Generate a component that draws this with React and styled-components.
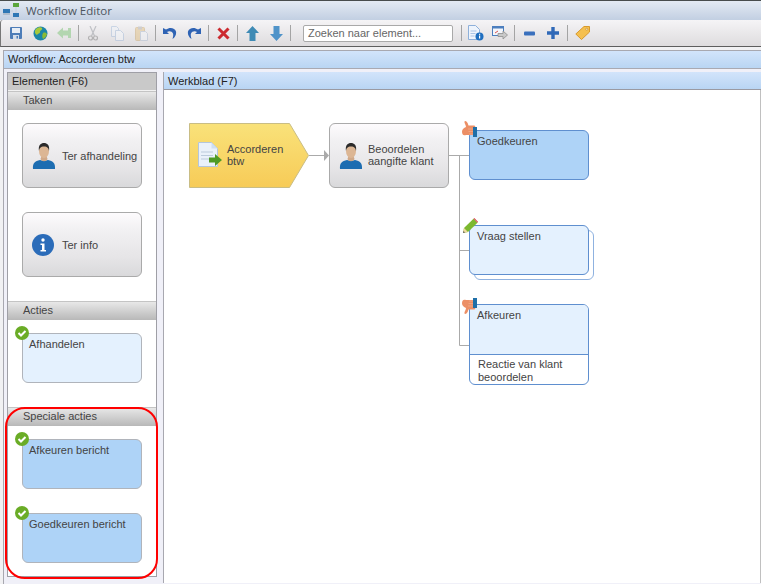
import { Fragment } from "react";
import styled, { createGlobalStyle } from "styled-components";

const GlobalStyle = createGlobalStyle`
    html, body {
        margin: 0;
        padding: 0;
        background: #f1f1f3;
    }
    body {
        font-family: "Liberation Sans", Arial, sans-serif;
        font-size: 11px;
        color: #444;
    }
`;

const Page = styled.div`
    width: 761px;
    height: 584px;
    overflow: hidden;
    position: relative;
`;

const TitleBar = styled.div`
    height: 19px;
    border-top: 1px solid #474c4c;
    background: linear-gradient(#e3eaf3, #c2cfe2);
    display: flex;
    align-items: center;
    padding-left: 2px;
    gap: 6px;
`;

const TitleText = styled.span`
    font-family: "Open Sans", sans-serif;
    font-size: 11.5px;
    color: #4c5560;
`;

const Toolbar = styled.div`
    height: 26px;
    border-bottom: 1px solid #5e5e5e;
    border-left: 1px solid #777;
    border-top-left-radius: 3px;
    background: linear-gradient(#f5f4f6, #dedcde);
    display: flex;
    align-items: center;
    padding-left: 3px;
`;

const ToolButton = styled.div`
    width: 24px;
    height: 24px;
    display: flex;
    align-items: center;
    justify-content: center;
    opacity: ${(props) => (props.$faded ? 0.45 : 1)};
`;

const Separator = styled.div`
    width: 1px;
    height: 16px;
    background: #a4a4a4;
    margin: 0 2px;
`;

const SearchBox = styled.div`
    width: 144px;
    height: 15px;
    margin: 0 6px 0 10px;
    background: #fff;
    border: 1px solid #a9a9a9;
    border-radius: 2px;
    font-size: 11px;
    line-height: 15px;
    color: #666;
    padding-left: 4px;
`;

const Frame = styled.div`
    margin: 3px 0 0 3px;
    height: 533px;
    border: 1px solid #a8a8b0;
    border-right: none;
    border-bottom-color: #c4c4c8;
    background: #f0f0f8;
`;

const WorkflowBar = styled.div`
    height: 17px;
    line-height: 17px;
    padding-left: 4px;
    background: linear-gradient(#d2e4fb, #b9d5f3);
    border-bottom: 1px solid #a9a9b2;
    color: #222;
`;

const Panes = styled.div`
    display: grid;
    grid-template-columns: 150px 1fr;
    column-gap: 6px;
    padding: 3px 0 0 3px;
`;

const Sidebar = styled.div`
    height: 505px;
    border: 1px solid #9f9fa6;
    box-sizing: border-box;
    background: #fff;
`;

const SidebarHeader = styled.div`
    height: 17px;
    line-height: 16px;
    padding-left: 4px;
    background: #c9c9c9;
    border-bottom: 1px solid #f2f2f2;
    color: #222;
`;

const SectionHeader = styled.div`
    height: 18px;
    line-height: 17px;
    padding-left: 15px;
    border-top: 1px solid #c4c4c4;
    background: linear-gradient(#e8e8e8, #b8b8b8);
    color: #444;
`;

const SectionBody = styled.div`
    display: flex;
    flex-direction: column;
    gap: 24px;
    padding: ${(props) => props.$top}px 14px ${(props) => props.$bottom}px 14px;
`;

const Tile = styled.div`
    position: relative;
    width: 120px;
    height: ${(props) => (props.$large ? 65 : 50)}px;
    box-sizing: border-box;
    border: 1px solid ${(props) => (props.$variant === "gray" ? "#aaa" : "#b0b4bb")};
    border-radius: 6px;
    background: ${(props) =>
        props.$variant === "gray"
            ? "linear-gradient(#fdfbfd, #f2f1f3 25%, #e6e5e7 70%, #d9d9db)"
            : props.$variant === "light"
              ? "#e4f1fe"
              : "#aed3f7"};
    display: flex;
    align-items: ${(props) => (props.$variant === "gray" ? "center" : "flex-start")};
    gap: 6px;
    padding: ${(props) => (props.$variant === "gray" ? "0 0 0 9px" : "4px 0 0 6px")};
    color: #444;
`;

const IconSlot = styled.div`
    width: 24px;
    line-height: 0;
`;

const Badge = styled.div`
    position: absolute;
    left: ${(props) => props.$left}px;
    top: ${(props) => props.$top}px;
    line-height: 0;
`;

const Worksheet = styled.div`
    border-left: 1px solid #a8a8b0;
    background: #fff;
`;

const WorksheetHeader = styled.div`
    height: 17px;
    line-height: 19px;
    padding-left: 4px;
    background: linear-gradient(#d2e4fb, #b9d5f3);
    border-bottom: 1px solid #9a9aa2;
    color: #222;
`;

const Canvas = styled.div`
    position: relative;
    height: 493px;
    border-right: 1px solid #c0c0c0;
    background: #fff;
`;

const Wires = styled.svg`
    position: absolute;
    left: 0;
    top: 0;
`;

const Node = styled.div`
    position: absolute;
    left: ${(props) => props.$x}px;
    top: ${(props) => props.$y}px;
    width: ${(props) => props.$w || 120}px;
    height: ${(props) => props.$h || 50}px;
    box-sizing: border-box;
`;

const StartLabel = styled.div`
    position: absolute;
    left: 38px;
    top: 20px;
    line-height: 12px;
    color: #444;
`;

const GrayNode = styled(Node)`
    border: 1px solid #aaa;
    border-radius: 6px;
    background: linear-gradient(#fdfbfd, #f2f1f3 25%, #e6e5e7 70%, #d9d9db);
    display: flex;
    align-items: center;
    gap: 5px;
    padding-left: 9px;
    line-height: 12px;
`;

const GrayNodeLabel = styled.span`
    margin-bottom: 2px;
`;

const ActionNode = styled(Node)`
    border: 1px solid #5f8fcf;
    border-radius: 6px;
    padding: 4px 0 0 7px;
    background: ${(props) => (props.$strong ? "#aed3f7" : "#e4f1fe")};
`;

const ShadowNode = styled(Node)`
    border: 1px solid #8fb2e0;
    border-radius: 6px;
    background: #fff;
`;

const SplitNode = styled(Node)`
    border: 1px solid #5f8fcf;
    border-radius: 6px;
    background: #fff;
    overflow: hidden;
`;

const SplitTop = styled.div`
    height: 45px;
    padding: 4px 0 0 7px;
    background: #e4f1fe;
    border-bottom: 1px solid #5f8fcf;
`;

const SplitBottom = styled.div`
    padding: 3px 0 0 8px;
    line-height: 13px;
`;

const Highlight = styled.div`
    position: absolute;
    left: 5px;
    top: 407px;
    width: 149px;
    height: 168px;
    border: 2px solid #f00;
    border-radius: 20px;
    pointer-events: none;
`;

const Logo = () => (
    <svg width="18" height="17" viewBox="0 0 18 17">
        <path d="M7 9h4M14 5v6" stroke="#c5d0dc" fill="none" />
        <rect x="11" y="1" width="6" height="4" fill="#5aa63c" />
        <rect x="1" y="7" width="7" height="4" fill="#2f77b5" />
        <rect x="11" y="11" width="6" height="4" fill="#2f77b5" />
        <rect x="1" y="11" width="7" height="2" fill="#aebccd" />
    </svg>
);

const SaveIcon = () => (
    <svg width="14" height="14" viewBox="0 0 14 14">
        <rect x="1" y="1" width="12" height="12" rx="1" fill="#4e7db8" />
        <rect x="3" y="2" width="8" height="5" fill="#e8eef6" />
        <rect x="4" y="9" width="6" height="4" fill="#d5deea" />
        <rect x="7.5" y="10" width="1.5" height="2.5" fill="#4e7db8" />
    </svg>
);

const GlobeIcon = () => (
    <svg width="15" height="15" viewBox="0 0 15 15">
        <circle cx="7.5" cy="7.5" r="7" fill="#1c86a8" />
        <path d="M3 3c2-2 5-2 6-1 1 2-2 2-2 4s-2 1-3 3C2 8 1 5 3 3z" fill="#a7c93a" />
        <path d="M10 7c2-1 3 0 4 1-1 3-2 4-4 5-1-2-1-4 0-6z" fill="#8cbb33" />
    </svg>
);

const BackIcon = () => (
    <svg width="15" height="12" viewBox="0 0 15 12">
        <path d="M0 6l6-5.500v3h5V1h3v10h-3V8.500H6v3z" fill="#b3d6b0" />
    </svg>
);

const CutIcon = () => (
    <svg width="10" height="15" viewBox="0 0 10 15">
        <path d="M2 0l4.500 10M8 0L3.500 10" stroke="#8a8f96" strokeWidth="1.200" fill="none" />
        <circle cx="2.500" cy="12" r="2" stroke="#777" strokeWidth="1.200" fill="none" />
        <circle cx="7.500" cy="12" r="2" stroke="#777" strokeWidth="1.200" fill="none" />
    </svg>
);

const CopyIcon = () => (
    <svg width="13" height="15" viewBox="0 0 13 15">
        <path d="M.5.500h5l2 2v8h-7z" fill="#eef3fa" stroke="#9db7d8" />
        <path d="M4.500 4.500h5l3 3v7h-8z" fill="#f6f9fd" stroke="#9db7d8" />
    </svg>
);

const PasteIcon = () => (
    <svg width="13" height="15" viewBox="0 0 13 15">
        <rect x=".5" y="1.500" width="9" height="13" rx="1" fill="#e2bd7a" stroke="#c7a262" />
        <rect x="3" y=".5" width="4" height="3" fill="#a9a9a9" />
        <path d="M5.500 5.500h5l2 2v7h-7z" fill="#f4f6fa" stroke="#a8b8cf" />
    </svg>
);

const UndoIcon = ({ flip }) => (
    <svg width="14" height="12" viewBox="0 0 14 12" style={flip ? { transform: "scaleX(-1)" } : undefined}>
        <path d="M0 1v6h6L4 5c2-1.500 5-1 6 1.500.4 1.200.3 3-.5 5.500 3-2 4-5 3.500-7.500C12 1 7-.5 3 2.500z" fill="#2f63b4" />
    </svg>
);

const DeleteIcon = () => (
    <svg width="13" height="13" viewBox="0 0 13 13">
        <path d="M1.500 1.500l10 10M11.500 1.500l-10 10" stroke="#cc2a2f" strokeWidth="3" fill="none" />
    </svg>
);

const ArrowIcon = ({ down }) => (
    <svg width="13" height="15" viewBox="0 0 13 15" style={down ? { transform: "scaleY(-1)" } : undefined}>
        <path d="M6.500 0L13 7H9.500v8h-6V7H0z" fill={down ? "#4f93c9" : "#3f8bb5"} />
    </svg>
);

const DocInfoIcon = () => (
    <svg width="16" height="16" viewBox="0 0 16 16">
        <path d="M.5.500h7l4 4v10H.5z" fill="#eef4fc" stroke="#8eb0da" />
        <path d="M2.500 6h6M2.500 8.500h5M2.500 11h4" stroke="#a9c4e6" />
        <circle cx="11.500" cy="11.500" r="4" fill="#1f6fc0" />
        <rect x="11" y="10.500" width="1.200" height="3" fill="#fff" />
        <rect x="11" y="8.800" width="1.200" height="1" fill="#fff" />
    </svg>
);

const ScreenIcon = () => (
    <svg width="16" height="14" viewBox="0 0 16 14">
        <rect x=".5" y=".5" width="11" height="9" fill="#f4f6fb" stroke="#4c7fbe" />
        <rect x=".5" y=".5" width="11" height="2" fill="#4c7fbe" />
        <path d="M3 7l3-2" stroke="#d9534f" fill="none" />
        <path d="M6 7.500h5V5l4.500 4-4.500 4v-2.500H6z" fill="#c9c9c9" stroke="#8f8f8f" strokeWidth=".8" />
    </svg>
);

const MinusIcon = () => (
    <svg width="11" height="5" viewBox="0 0 11 5">
        <rect y=".5" width="11" height="4" rx="1" fill="#3a70bd" />
    </svg>
);

const PlusIcon = () => (
    <svg width="12" height="12" viewBox="0 0 12 12">
        <path d="M4.300 0h3.400v4.300H12v3.400H7.700V12H4.300V7.700H0V4.300h4.300z" fill="#3069b8" />
    </svg>
);

const TagIcon = () => (
    <svg width="15" height="14" viewBox="0 0 15 14">
        <path d="M9 .5h5.500V6L6.500 13.500.8 8z" fill="#f5c04f" stroke="#d79a2f" />
        <circle cx="11.800" cy="3.200" r="1" fill="#fff" stroke="#b87f20" strokeWidth=".6" />
    </svg>
);

const Person = () => (
    <svg width="24" height="28" viewBox="0 0 24 28">
        <path d="M1 27c-.5-6 2-8 7-9l4 1 4-1c5 1 7.500 3 7 9z" fill="#1d6db1" />
        <path d="M8.500 17c1 3 6 3 7 0l-1-3h-5z" fill="#d0a989" />
        <ellipse cx="12" cy="9" rx="5" ry="7" fill="#dcb694" />
        <path d="M7 9C6 3 9 1 12 1s6 2 5 8c-.5-3-1.500-4.500-5-4.500S7.500 6 7 9z" fill="#2a2a2a" />
    </svg>
);

const InfoIcon = () => (
    <svg width="22" height="22" viewBox="0 0 22 22">
        <circle cx="11" cy="11" r="11" fill="#2b6cb9" />
        <circle cx="11" cy="6" r="1.700" fill="#fff" />
        <path d="M8.500 9.500H12.500V16H14V17.500H8.500V16H10V11H8.500z" fill="#fff" />
    </svg>
);

const CheckBadge = () => (
    <svg width="14" height="14" viewBox="0 0 14 14">
        <circle cx="7" cy="7" r="7" fill="#6aac26" />
        <path d="M3.500 7l2.500 2.500L10.500 5" stroke="#fff" strokeWidth="2" fill="none" />
    </svg>
);

const DocArrow = () => (
    <svg width="24" height="26" viewBox="0 0 24 26">
        <path d="M.5.500h13l6 6v18H.5z" fill="#eaf1fa" stroke="#b4c6dc" />
        <path d="M13.500.500v6h6z" fill="#cfdff0" />
        <path d="M3 10h12M3 13.500h12M3 17h8" stroke="#bccbdc" fill="none" />
        <path d="M11 15.500h6V12l7 6-7 6v-3.500h-6z" fill="#4f9a26" />
    </svg>
);

const ThumbIcon = ({ down }) => (
    <svg width="16" height="16" viewBox="0 0 16 16">
        <g transform={down ? "translate(0 16) scale(1 -1)" : undefined}>
            <path d="M3 0c1.500 0 2.500 1 3.500 4.500H12c1.500 0 1.500 2 1 2.500.6 1 .5 2-.2 2.500.3 1 0 2-.8 2.300 0 1.200-.5 2.200-1.500 2.200H4C1 15 0 13 0 10.500S2 7 4 6C4 4 2 2 2.500.5z" fill="#ec8f66" />
            <path d="M6 8h6M6.500 10.500h5.500M7 13h4" stroke="#f0a583" fill="none" />
        </g>
        <rect x="11" y={down ? 0 : 6} width="4" height="10" fill="#1f6fa8" />
    </svg>
);

const PencilIcon = () => (
    <svg width="15" height="15" viewBox="0 0 15 15">
        <path d="M0 15l1-5L10.500 .8l4 4L5 14z" fill="#7cb82f" />
        <path d="M0 15l1-5 4 4z" fill="#f0d9a0" />
        <path d="M0 15l.5-2 1.500 1.500z" fill="#555" />
        <path d="M10.500 .8l.8-.8 3.700 3.700-.5 1.100z" fill="#d9434e" />
    </svg>
);

const TOOLS = [
    [<SaveIcon />, <GlobeIcon />, <BackIcon />],
    [<CutIcon />, <CopyIcon />, <PasteIcon />],
    [<UndoIcon />, <UndoIcon flip />],
    [<DeleteIcon />],
    [<ArrowIcon />, <ArrowIcon down />],
];

const App = () => {
    return (
        <Page>
            <GlobalStyle />
            <TitleBar>
                <Logo />
                <TitleText>Workflow Editor</TitleText>
            </TitleBar>
            <Toolbar>
                {TOOLS.map((group, i) => (
                    <Fragment key={i}>
                        {group.map((icon, j) => (
                            <ToolButton key={j} $faded={i === 1}>{icon}</ToolButton>
                        ))}
                        <Separator />
                    </Fragment>
                ))}
                <SearchBox>Zoeken naar element...</SearchBox>
                <Separator />
                <ToolButton><DocInfoIcon /></ToolButton>
                <ToolButton><ScreenIcon /></ToolButton>
                <Separator />
                <ToolButton><MinusIcon /></ToolButton>
                <ToolButton><PlusIcon /></ToolButton>
                <Separator />
                <ToolButton><TagIcon /></ToolButton>
            </Toolbar>
            <Frame>
                <WorkflowBar>Workflow: Accorderen btw</WorkflowBar>
                <Panes>
                    <Sidebar>
                        <SidebarHeader>Elementen (F6)</SidebarHeader>
                        <SectionHeader>Taken</SectionHeader>
                        <SectionBody $top={13} $bottom={24}>
                            <Tile $variant="gray" $large>
                                <IconSlot><Person /></IconSlot>
                                Ter afhandeling
                            </Tile>
                            <Tile $variant="gray" $large>
                                <IconSlot><InfoIcon /></IconSlot>
                                Ter info
                            </Tile>
                        </SectionBody>
                        <SectionHeader>Acties</SectionHeader>
                        <SectionBody $top={13} $bottom={24}>
                            <Tile $variant="light">
                                <Badge $left={-8} $top={-8}><CheckBadge /></Badge>
                                Afhandelen
                            </Tile>
                        </SectionBody>
                        <SectionHeader>Speciale acties</SectionHeader>
                        <SectionBody $top={13} $bottom={14}>
                            <Tile>
                                <Badge $left={-8} $top={-8}><CheckBadge /></Badge>
                                Afkeuren bericht
                            </Tile>
                            <Tile>
                                <Badge $left={-8} $top={-8}><CheckBadge /></Badge>
                                Goedkeuren bericht
                            </Tile>
                        </SectionBody>
                    </Sidebar>
                    <Worksheet>
                        <WorksheetHeader>Werkblad (F7)</WorksheetHeader>
                        <Canvas>
                            <Wires width="597" height="492">
                                <path
                                    d="M145 65.500H160M285 65.500H305M295.500 65.500V255.500H305M295.500 160.500H305"
                                    stroke="#aaa"
                                    fill="none"
                                />
                                <path d="M160 60l5 5.500-5 5.500z" fill="#aaa" />
                                <path
                                    d="M25.500 33.500h100l19 32-19 32h-100z"
                                    fill="url(#startFill)"
                                    stroke="#c9bd85"
                                />
                                <defs>
                                    <linearGradient id="startFill" x1="0" y1="0" x2="0" y2="1">
                                        <stop offset="0" stopColor="#f9e27a" />
                                        <stop offset="1" stopColor="#f7cb57" />
                                    </linearGradient>
                                </defs>
                            </Wires>
                            <Node $x={25} $y={33} $w={120} $h={65}>
                                <Badge $left={9} $top={19}><DocArrow /></Badge>
                                <StartLabel>Accorderen<br />btw</StartLabel>
                            </Node>
                            <GrayNode $x={165} $y={33} $h={65}>
                                <Person />
                                <GrayNodeLabel>Beoordelen<br />aangifte klant</GrayNodeLabel>
                            </GrayNode>
                            <ActionNode $x={305} $y={40} $strong>
                                <Badge $left={-8} $top={-10}><ThumbIcon /></Badge>
                                Goedkeuren
                            </ActionNode>
                            <ShadowNode $x={310} $y={140} />
                            <ActionNode $x={305} $y={135}>
                                <Badge $left={-7} $top={-8}><PencilIcon /></Badge>
                                Vraag stellen
                            </ActionNode>
                            <SplitNode $x={305} $y={214} $h={81}>
                                <SplitTop>Afkeuren</SplitTop>
                                <SplitBottom>Reactie van klant<br />beoordelen</SplitBottom>
                            </SplitNode>
                            <Badge $left={298} $top={208}><ThumbIcon down /></Badge>
                        </Canvas>
                    </Worksheet>
                </Panes>
            </Frame>
            <Highlight />
        </Page>
    );
};

export default App;
